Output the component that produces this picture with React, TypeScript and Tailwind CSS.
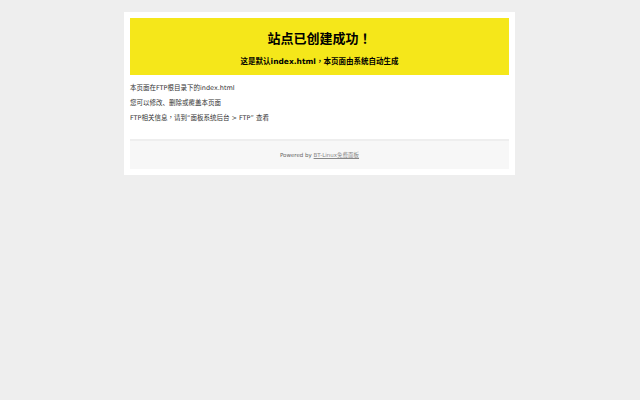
export default function App() {
  const font = { fontFamily: '"DejaVu Sans", "Noto Sans CJK SC", sans-serif' };
  const P = ({ c }: { c: string }) => (
    <span className="[font-family:'Noto_Sans_CJK_TC',sans-serif]">{c}</span>
  );
  return (
    <div className="min-h-[400px] w-[640px] bg-[#eeeeee] pt-[12px]" style={font}>
      <div className="ml-[124px] w-[391px] bg-white p-[6px]">
        <div className="flex h-[57px] flex-col items-center bg-[#f5e71a] pt-[11px]">
          <h1 className="text-[13px] font-bold leading-[18px] text-black">
            站点已创建成功<P c="！" />
          </h1>
          <h2 className="mt-[8px] text-[7.5px] font-bold leading-[10px] text-black">
            这是默认index.html<P c="，" />本页面由系统自动生成
          </h2>
        </div>
        <div className="pt-[8px] text-[6.5px] leading-[10px] text-[#333]">
          <p className="mb-[4.5px]">本页面在FTP根目录下的index.html</p>
          <p className="mb-[4.5px]">您可以修改、删除或覆盖本页面</p>
          <p>
            FTP相关信息<P c="，" />请到“面板系统后台 &gt; FTP” 查看
          </p>
        </div>
        <div className="mt-[16px] flex h-[30px] items-center justify-center border-t-[2px] border-[#eeeeee] bg-[#f7f7f7] pt-[1px] text-[5.5px] text-[#666]">
          <span>
            Powered by <a className="text-[#888] underline">BT-Linux免费面板</a>
          </span>
        </div>
      </div>
    </div>
  );
}
